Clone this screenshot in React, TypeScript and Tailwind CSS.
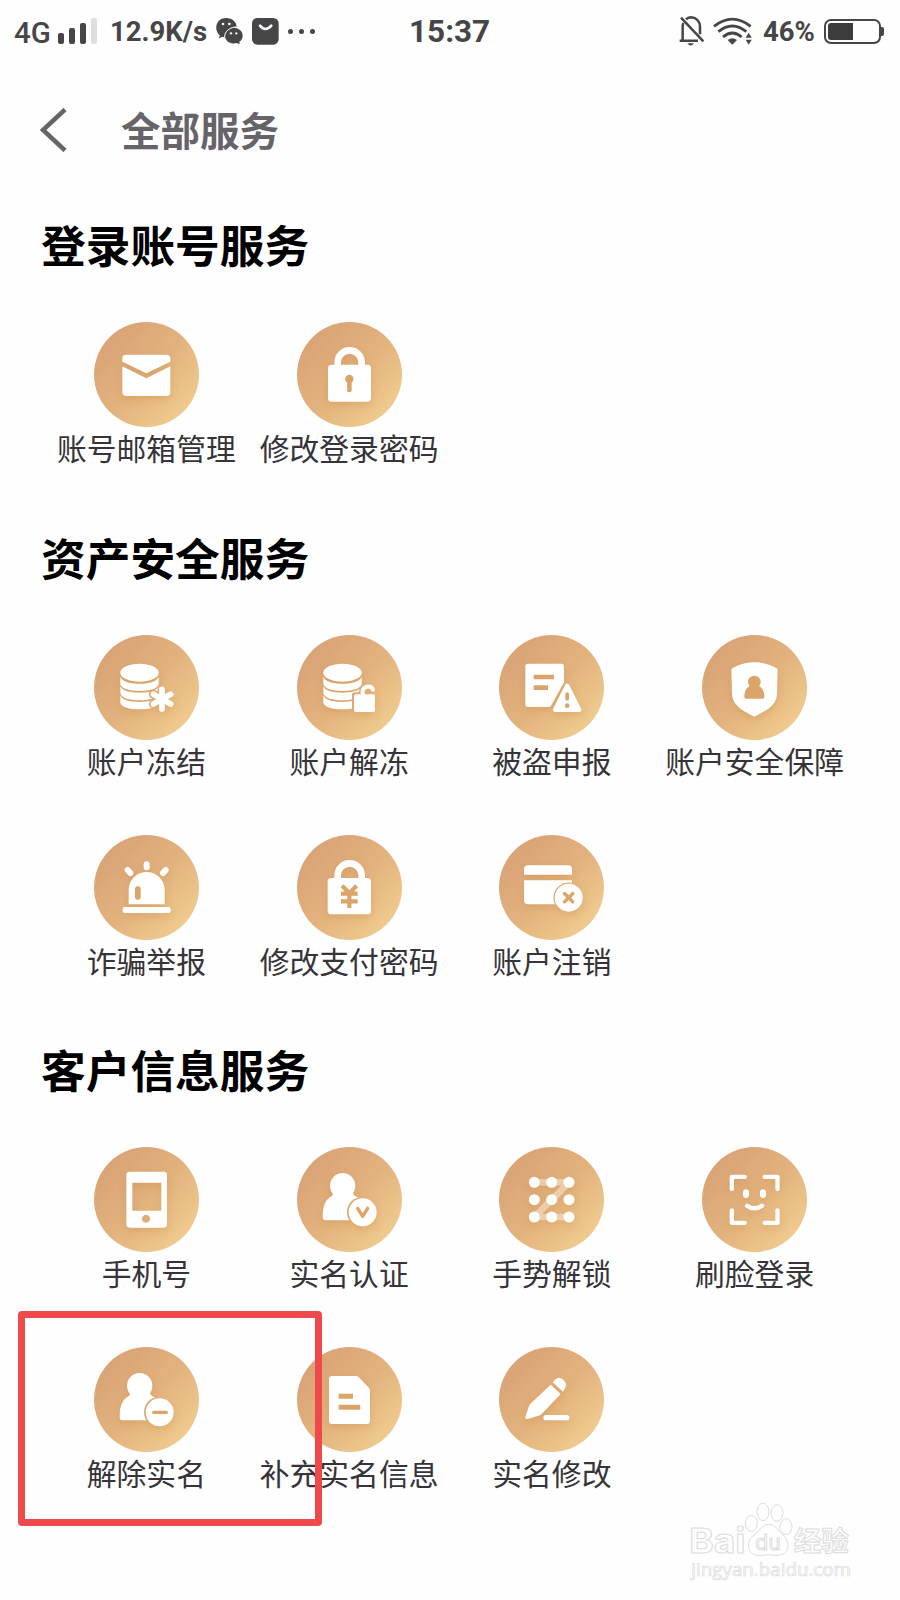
import React from 'react';

const ACCENT = '#dba469';

interface Service {
  label: string;
  icon: React.ReactNode;
}

interface Section {
  title: string;
  services: Service[];
}

const PADLOCK_SHACKLE = 'M122 134V121a36 36 0 0 1 72 0V134';

function MailIcon() {
  return (
    <>
      <path d="M97 98H217a12 12 0 0 1 12 12V119L157 154L85 119V110a12 12 0 0 1 12-12Z" />
      <path d="M85 133L157 169L229 133V210a12 12 0 0 1-12 12H97a12 12 0 0 1-12-12Z" />
    </>
  );
}

function LockIcon() {
  return (
    <>
      <path d={PADLOCK_SHACKLE} fill="none" stroke="#fff" strokeWidth="20" />
      <rect x="93" y="128" width="129" height="111" rx="11" />
      <circle cx="157" cy="171" r="12.5" fill={ACCENT} />
      <rect x="150.500" y="171" width="13.500" height="40" rx="6" fill={ACCENT} />
    </>
  );
}

function YenLockIcon() {
  return (
    <>
      <path d={PADLOCK_SHACKLE} fill="none" stroke="#fff" strokeWidth="20" />
      <rect x="92" y="129" width="130" height="109" rx="11" />
      <path
        d="M135 152L157 174L179 152M157 170V219M132 176H182M132 199H182"
        fill="none"
        stroke={ACCENT}
        strokeWidth="12.500"
      />
    </>
  );
}

function Coins() {
  return (
    <>
      <ellipse cx="136.500" cy="113" rx="57.500" ry="27" />
      <path d="M79 125C84 139 106 146 136.500 146S189 139 194 125V148C189 162 167 168 136.500 168S84 162 79 148Z" />
      <path d="M79 153C84 167 106 173 136.500 173S189 167 194 153V175C189 190 167 196 136.500 196S84 190 79 175Z" />
      <path d="M79 181C84 195 106 201 136.500 201S189 195 194 181V203C189 217 167 223 136.500 223S84 217 79 203Z" />
    </>
  );
}

function FreezeIcon() {
  const star = 'M204 163V222M178 178L230 207M178 207L230 178';
  return (
    <>
      <mask id="freeze-cut" maskUnits="userSpaceOnUse" x="0" y="0" width="315" height="315">
        <rect width="315" height="315" fill="#fff" />
        <path d={star} stroke="#000" strokeWidth="27" strokeLinecap="round" />
      </mask>
      <g mask="url(#freeze-cut)">
        <Coins />
      </g>
      <path d={star} stroke="#fff" strokeWidth="17" strokeLinecap="round" />
    </>
  );
}

function UnfreezeIcon() {
  const shackle = 'M197 178V168a16 14 0 0 1 31-4';
  return (
    <>
      <mask id="unfreeze-cut" maskUnits="userSpaceOnUse" x="0" y="0" width="315" height="315">
        <rect width="315" height="315" fill="#fff" />
        <rect x="165" y="172" width="75" height="65" rx="8" fill="#000" />
        <path d={shackle} fill="none" stroke="#000" strokeWidth="22" />
      </mask>
      <g mask="url(#unfreeze-cut)">
        <Coins />
      </g>
      <rect x="171" y="178" width="63" height="53" rx="6" />
      <path d={shackle} fill="none" stroke="#fff" strokeWidth="12" strokeLinecap="round" />
    </>
  );
}

function ReportIcon() {
  return (
    <>
      <path d="M87 86H187a8 8 0 0 1 8 8V142L157 211Q154 216 149 216H87a8 8 0 0 1-8-8V94a8 8 0 0 1 8-8Z" />
      <path d="M104 126H165M104 158H147" stroke={ACCENT} strokeWidth="14" />
      <path d="M204.500 153L240 224H169Z" stroke="#fff" strokeWidth="14" strokeLinejoin="round" />
      <path d="M204.500 177V192" stroke={ACCENT} strokeWidth="11" strokeLinecap="round" />
      <circle cx="204.500" cy="212" r="7" fill={ACCENT} />
    </>
  );
}

function ShieldIcon() {
  return (
    <>
      <path d="M92 99Q122 82 157 82T223 99Q227 101 227 105L225 176C224 214 188 228 157 245C126 228 92 214 90 176L88 105Q88 101 92 99Z" />
      <circle cx="157" cy="141" r="19" fill={ACCENT} />
      <path d="M143 152H171C183 161 187 171 187 186Q187 191 182 191H132Q127 191 127 186C127 171 131 161 143 152Z" fill={ACCENT} />
    </>
  );
}

function SirenIcon() {
  return (
    <>
      <path d="M158 88V97M101 105L109 114M215 105L207 114" stroke="#fff" strokeWidth="18" strokeLinecap="round" />
      <path d="M104 208V165a54 54 0 0 1 108 0V208Z" />
      <rect x="86" y="216" width="144" height="18" rx="6" />
      <rect x="123" y="154" width="17" height="40" rx="8" fill={ACCENT} />
    </>
  );
}

function CloseCardIcon() {
  return (
    <>
      <mask id="card-cut" maskUnits="userSpaceOnUse" x="0" y="0" width="315" height="315">
        <rect width="315" height="315" fill="#fff" />
        <circle cx="209" cy="188" r="45.500" fill="#000" />
      </mask>
      <g mask="url(#card-cut)">
        <path d="M75 119V103a12 12 0 0 1 12-12H207a12 12 0 0 1 12 12V119Z" />
        <path d="M75 136H219V208H87a12 12 0 0 1-12-12Z" />
      </g>
      <circle cx="209" cy="188" r="42" />
      <path d="M196.500 175.500L221.500 200.500M221.500 175.500L196.500 200.500" stroke={ACCENT} strokeWidth="10" strokeLinecap="round" />
    </>
  );
}

function PhoneIcon() {
  return (
    <path
      fillRule="evenodd"
      d="M107 74H209a10 10 0 0 1 10 10V232a10 10 0 0 1-10 10H107a10 10 0 0 1-10-10V84a10 10 0 0 1 10-10ZM115 107V191H202V107ZM156 203a12 12 0 1 0 .01 0Z"
    />
  );
}

function PersonBadge({ id, children }: { id: string; children: React.ReactNode }) {
  return (
    <>
      <mask id={id} maskUnits="userSpaceOnUse" x="0" y="0" width="315" height="315">
        <rect width="315" height="315" fill="#fff" />
        <circle cx="197" cy="196" r="47" fill="#000" />
      </mask>
      <g mask={`url(#${id})`}>
        <circle cx="137" cy="116" r="38" />
        <path d="M107 136C110 146 103 148 97 152C82 163 77 184 77 211Q77 220 86 220H190V160C184 148 169 150 168 136Z" />
      </g>
      <circle cx="197" cy="196" r="42" />
      {children}
    </>
  );
}

function VerifyIcon() {
  return (
    <PersonBadge id="verify-cut">
      <path d="M182 184L197 208L212 184" fill="none" stroke={ACCENT} strokeWidth="10" strokeLinecap="round" strokeLinejoin="round" />
    </PersonBadge>
  );
}

function UnbindIcon() {
  return (
    <PersonBadge id="unbind-cut">
      <path d="M179 196H217" stroke={ACCENT} strokeWidth="10" strokeLinecap="round" />
    </PersonBadge>
  );
}

function PatternIcon() {
  const stops = [106, 158, 210];
  return (
    <>
      <path d="M106 106H210L106 210H210" fill="none" stroke="#fff" strokeOpacity="0.4" strokeWidth="20" strokeLinejoin="round" />
      {stops.map((y) => stops.map((x) => <circle key={`${x}-${y}`} cx={x} cy={y} r="16.500" />))}
    </>
  );
}

function FaceIcon() {
  return (
    <>
      <path
        d="M89.500 126V89.500H128M188 89.500H226.500V126M226.500 190V227.500H188M128 227.500H89.500V190"
        fill="none"
        stroke="#fff"
        strokeWidth="13"
        strokeLinecap="round"
        strokeLinejoin="round"
      />
      <ellipse cx="132" cy="140" rx="9.500" ry="13" />
      <ellipse cx="183" cy="140" rx="9.500" ry="13" />
      <path d="M135 176Q157 192 180 176" fill="none" stroke="#fff" strokeWidth="13" strokeLinecap="round" />
    </>
  );
}

function DocumentIcon() {
  return (
    <>
      <path d="M106 87H178Q182 87 185 90L216 123Q219 126 219 131V221a10 10 0 0 1-10 10H106a10 10 0 0 1-10-10V97a10 10 0 0 1 10-10Z" />
      <path d="M125 148H168M125 180.500H190" stroke={ACCENT} strokeWidth="15" />
    </>
  );
}

function PencilIcon() {
  return (
    <>
      <path d="M161 106L171 96Q182 88 193 98Q205 109 200 120L192 134Z" />
      <path d="M155 113L185 141L129 200Q125 204 119 206L86 216Q78 217 79 209L90 177Q92 172 96 169Z" />
      <rect x="133" y="204" width="78" height="16" rx="8" />
    </>
  );
}

const sections: Section[] = [
  {
    title: '登录账号服务',
    services: [
      { label: '账号邮箱管理', icon: <MailIcon /> },
      { label: '修改登录密码', icon: <LockIcon /> },
    ],
  },
  {
    title: '资产安全服务',
    services: [
      { label: '账户冻结', icon: <FreezeIcon /> },
      { label: '账户解冻', icon: <UnfreezeIcon /> },
      { label: '被盗申报', icon: <ReportIcon /> },
      { label: '账户安全保障', icon: <ShieldIcon /> },
      { label: '诈骗举报', icon: <SirenIcon /> },
      { label: '修改支付密码', icon: <YenLockIcon /> },
      { label: '账户注销', icon: <CloseCardIcon /> },
    ],
  },
  {
    title: '客户信息服务',
    services: [
      { label: '手机号', icon: <PhoneIcon /> },
      { label: '实名认证', icon: <VerifyIcon /> },
      { label: '手势解锁', icon: <PatternIcon /> },
      { label: '刷脸登录', icon: <FaceIcon /> },
      { label: '解除实名', icon: <UnbindIcon /> },
      { label: '补充实名信息', icon: <DocumentIcon /> },
      { label: '实名修改', icon: <PencilIcon /> },
    ],
  },
];

function StatusBar() {
  return (
    <div className="flex h-[62px] items-center font-['Roboto',sans-serif] text-[#474548]">
      {/* Left side: network, speed, notifications */}
      <div className="flex w-[409px] items-center pl-[14px]">
        <span className="w-[44px] pt-[5px] text-[29.5px] leading-none font-medium">4G</span>
        <div className="flex h-[26px] w-[52px] items-end gap-[5.5px]">
          <div className="h-[11px] w-[5.5px] rounded-[2px] bg-current" />
          <div className="h-[16px] w-[5.5px] rounded-[2px] bg-current" />
          <div className="h-[21px] w-[5.5px] rounded-[2px] bg-current" />
          <div className="h-[26px] w-[5.5px] rounded-[2px] bg-[#e0dee1]" />
        </div>
        <span className="w-[106px] pt-[2px] text-[27.5px] leading-none font-bold whitespace-nowrap">12.9K/s</span>
        <svg className="h-[27px] w-[27px]" viewBox="650 50 81 81">
          <path d="M681 50C699 50 712 62 712 77C694 78 676 92 679 108Q673 108 669 106L659 111L661 101C643 88 648 50 681 50Z" fill="currentColor" />
          <path d="M703 79C719 79 730 90 730 103C730 111 726 117 720 121L721 129L712 125C692 130 677 118 677 103C677 90 688 79 703 79Z" fill="currentColor" />
          <circle cx="671" cy="68" r="4" fill="#fefefe" />
          <circle cx="690" cy="68" r="4" fill="#fefefe" />
          <circle cx="695" cy="96" r="3.500" fill="#fefefe" />
          <circle cx="711" cy="96" r="3.500" fill="#fefefe" />
          <path d="M712 77C694 76 675 90 676 107" fill="none" stroke="#fefefe" strokeWidth="3" />
        </svg>
        <svg className="ml-[8.5px] h-[27px] w-[27px]" viewBox="757 50 81 81">
          <rect x="757" y="50" width="80" height="80" rx="16" fill="currentColor" />
          <path d="M781 73Q797 93 815 73" fill="none" stroke="#fefefe" strokeWidth="8" strokeLinecap="round" />
        </svg>
        <div className="ml-[9px] flex gap-[6px]">
          <div className="size-[5px] rounded-full bg-current" />
          <div className="size-[5px] rounded-full bg-current" />
          <div className="size-[5px] rounded-full bg-current" />
        </div>
      </div>

      <span className="w-[270px] pt-[2px] text-[31.5px] leading-none font-bold">15:37</span>

      {/* Right side: mute, wifi, battery */}
      <svg className="h-[30px] w-[26px]" viewBox="688 46 78 90" fill="none" stroke="currentColor" strokeWidth="7.500">
        <path d="M699 119V78Q699 72 701 67M709 56Q716 50 725 50C741 51 751 63 751 78V101M690 120H745M694 51L761 122" />
        <path d="M713 128H733Q723 141 713 128Z" fill="currentColor" stroke="none" />
      </svg>
      <svg className="ml-[8px] h-[28px] w-[40px]" viewBox="790 48 120 84" fill="none" stroke="currentColor" strokeWidth="8.500">
        <path d="M793 76Q848 33 903 76M806 92Q848 58 890 92M820 108Q848 84 876 108" />
        <path d="M834 117Q848 106 862 117L848 131Z" fill="currentColor" stroke="none" />
        <path d="M897 95L906 110H888ZM897 131L906 116H888Z" fill="currentColor" stroke="none" />
      </svg>
      <span className="ml-[10px] w-[61px] pt-[1px] text-[27.5px] leading-none font-bold">46%</span>
      <div className="h-[25px] w-[57px] rounded-[7px] border-2 border-current p-[2px]">
        <div className="h-full w-1/2 rounded-l-[3px] bg-[#3c3d39]" />
      </div>
      <div className="h-[9px] w-[3px] rounded-r-[2px] bg-current" />
    </div>
  );
}

function ServiceItem({ label, icon }: Service) {
  return (
    <div className="flex flex-col items-center">
      <div className="size-[105px] rounded-full bg-linear-to-br from-[#d69d73] via-[#e2b27d] to-[#f4d495]">
        <svg
          className="size-full drop-shadow-[0_3px_4px_rgba(200,130,60,0.35)]"
          viewBox="0 0 315 315"
          fill="#fff"
        >
          {icon}
        </svg>
      </div>
      <span className="h-[45px] text-[29.8px] leading-[41px] whitespace-nowrap text-[#363438]">{label}</span>
    </div>
  );
}

function Watermark() {
  return (
    <svg className="absolute top-[1495px] left-[680px] h-[90px] w-[180px]" viewBox="30 45 540 270" fill="#fefefe" stroke="#dcdcdc" strokeWidth="3">
      <text x="58" y="219" fontFamily="Inter, sans-serif" fontWeight="700" fontSize="103" textLength="168" lengthAdjust="spacingAndGlyphs">Bai</text>
      <ellipse cx="244" cy="130" rx="18" ry="24" />
      <ellipse cx="279" cy="96" rx="18" ry="26" />
      <ellipse cx="321" cy="99" rx="18" ry="25" />
      <ellipse cx="348" cy="140" rx="18" ry="24" />
      <path d="M297 133C317 133 323 153 340 166C360 183 361 222 328 226C312 228 305 224 296 224C283 224 276 228 262 226C230 222 229 185 249 168C268 153 276 133 297 133Z" />
      <text x="256" y="209" fontFamily="Inter, sans-serif" fontWeight="400" fontSize="64" textLength="76" lengthAdjust="spacingAndGlyphs">du</text>
      <text x="371" y="213" fontFamily="'Noto Sans CJK SC', sans-serif" fontWeight="700" fontSize="83">经验</text>
      <text x="64" y="288" fontFamily="'Open Sans', sans-serif" fontSize="53" strokeWidth="2" textLength="479" lengthAdjust="spacingAndGlyphs">jingyan.baidu.com</text>
    </svg>
  );
}

export default function App() {
  return (
    <div className="relative h-[1600px] w-[900px] overflow-hidden bg-[#fefefe] font-['Noto_Sans_CJK_SC',sans-serif]">
      <StatusBar />

      <header className="flex h-[136px] items-center pl-[40px] text-[#666468]">
        <svg className="h-[44px] w-[27px]" viewBox="0 0 27 44" fill="none" stroke="currentColor" strokeWidth="4.500">
          <path d="M25 1.500L3 22L25 42.500" />
        </svg>
        <h1 className="ml-[54px] pb-[3px] text-[39.5px] leading-none font-bold">全部服务</h1>
      </header>

      <main className="flex flex-col gap-[56.6px] pt-[16px]">
        {sections.map((section) => (
          <section key={section.title}>
            <h2 className="pl-[41px] text-[44.7px] leading-[60px] font-bold text-black">{section.title}</h2>
            <div className="mt-[48px] -mb-[2px] grid grid-cols-4 gap-y-[50px] pr-[44px] pl-[45px]">
              {section.services.map((service) => (
                <ServiceItem key={service.label} {...service} />
              ))}
            </div>
          </section>
        ))}
      </main>

      {/* Highlight around 解除实名 */}
      <div className="absolute top-[1311px] left-[18px] h-[215px] w-[304px] rounded-[4px] border-[7px] border-[#ee4a4c]" />
      <Watermark />
    </div>
  );
}
